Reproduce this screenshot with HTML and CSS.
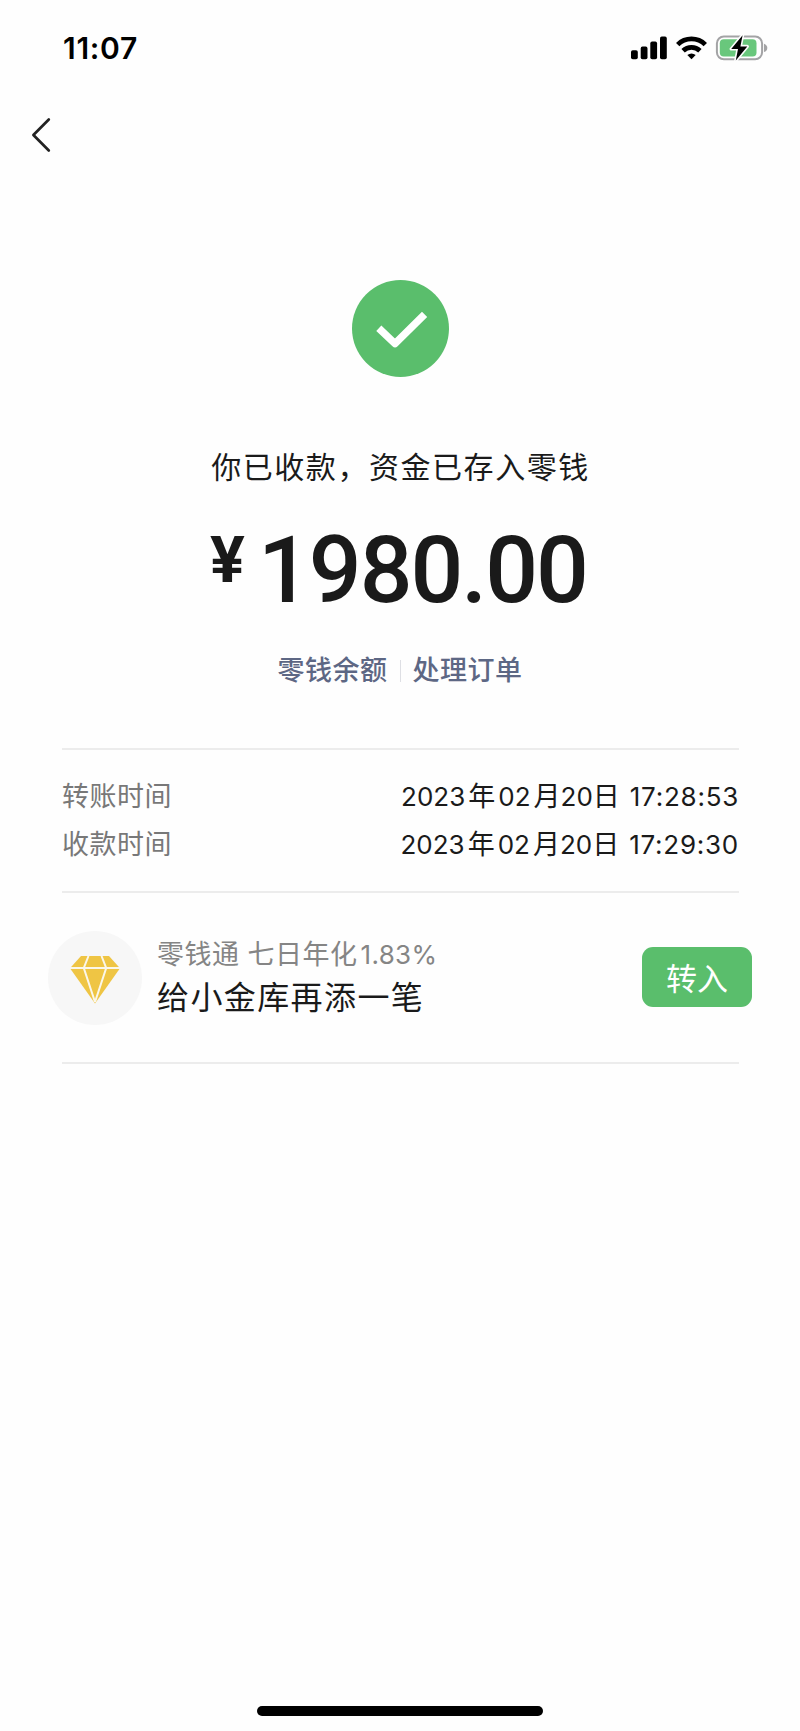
FILE: index.html
```html
<!DOCTYPE html>
<html lang="zh-CN">
<head>
<meta charset="utf-8">
<title>收款详情</title>
<link rel="stylesheet" href="styles.css">
</head>
<body>
<main class="screen">
  <header class="status-bar">
    <time class="clock">11:07</time>
    <svg class="status-icons" viewBox="630 34 138 28" aria-hidden="true">
      <rect x="631" y="50.3" width="6.8" height="8.9" rx="1.8"/>
      <rect x="640.7" y="46.6" width="6.8" height="12.6" rx="1.8"/>
      <rect x="650.3" y="41.6" width="6.8" height="17.6" rx="1.8"/>
      <rect x="660" y="36.6" width="6.8" height="22.6" rx="1.8"/>
      <g fill="none" stroke="#000" stroke-width="4.8">
        <path d="M677.7 44.6A19.6 19.6 0 0 1 705.3 44.6"/>
        <path d="M683.1 50.8A12 12 0 0 1 699.9 50.8"/>
      </g>
      <path d="M687.3 55Q691.5 51.8 695.7 55L691.5 59.3Z"/>
      <rect x="716.9" y="36.5" width="45.2" height="22.8" rx="7" fill="none" stroke="#a3a3a5" stroke-width="2"/>
      <rect x="719.8" y="39.3" width="36.7" height="17.2" rx="4" fill="#69c77c"/>
      <path d="M764 43.8Q767.3 45 767.3 48T764 52Z" fill="#a3a3a5"/>
      <path d="M742.6 35.2L731.2 48.9H738L735.8 60.4L747.3 46.4H740.4Z" stroke="#fefefe" stroke-width="3.2" paint-order="stroke" stroke-linejoin="round"/>
    </svg>
  </header>
  <nav class="nav">
    <svg class="back" viewBox="0 0 20 36" role="img" aria-label="返回"><path d="M17.8 2.5L2.4 18L17.8 33.5"/></svg>
  </nav>
  <section class="result">
    <svg class="success" viewBox="0 0 97 97" aria-hidden="true">
      <circle cx="48.5" cy="48.5" r="48.5" fill="#5abe6c"/>
      <path d="M26.8 48.3L43 63.6L72.6 34.4" fill="none" stroke="#fff" stroke-width="7.4" stroke-linejoin="round"/>
    </svg>
    <h1 class="message">你已收款，资金已存入零钱</h1>
    <div class="amount"><span class="currency">¥</span><span class="value">1980.00</span></div>
    <div class="links"><a>零钱余额</a><i class="separator"></i><a>处理订单</a></div>
  </section>
  <dl class="details">
    <div class="row"><dt>转账时间</dt><dd>2023<b class="year">年</b>02<b class="month">月</b>20<b class="day">日</b><span class="hour">17:28:53</span></dd></div>
    <div class="row"><dt>收款时间</dt><dd>2023<b class="year">年</b>02<b class="month">月</b>20<b class="day">日</b><span class="hour">17:29:30</span></dd></div>
  </dl>
  <section class="promo">
    <div class="badge">
      <svg class="diamond" viewBox="0 0 50 48" aria-hidden="true">
        <path d="M11 0H39L50 12.2L25 47.5L0 12.2Z" fill="#efc544"/>
        <path d="M0 12H50M18.500 0L13.800 12L25 46M31.500 0L36.200 12L25 46" fill="none" stroke="#fbf7ea" stroke-width="2"/>
      </svg>
    </div>
    <div class="promo-text">
      <p class="rate">零钱通 七日年化<span class="percent">1.83%</span></p>
      <p class="slogan">给小金库再添一笔</p>
    </div>
    <button class="transfer">转入</button>
  </section>
  <footer class="home"><div class="home-bar"></div></footer>
</main>
</body>
</html>
```
FILE: styles.css
```css
* { box-sizing: border-box; margin: 0; padding: 0; }
body { background: #fefefe; font-family: Inter, "Noto Sans CJK SC", sans-serif; color: #1a1a1a; }
.screen { display: flex; flex-direction: column; width: 800px; height: 1731px; }
.status-bar { display: flex; justify-content: space-between; align-items: center; height: 96px; padding: 0 32px 0 63px; }
.clock { font-size: 30px; font-weight: 600; line-height: 36px; letter-spacing: .7px; color: #000; }
.status-icons { width: 138px; height: 28px; }
.nav { display: flex; align-items: center; height: 78px; padding-left: 31px; }
.back { width: 20px; height: 36px; fill: none; stroke: #222; stroke-width: 2.7; stroke-linecap: round; stroke-linejoin: round; }
.result { display: flex; flex-direction: column; align-items: center; height: 574px; padding-top: 106px; }
.success { width: 97px; height: 97px; flex: none; }
.message { margin-top: 70px; padding-left: 1px; font-size: 30px; font-weight: 400; line-height: 40px; letter-spacing: 1.55px; }
.amount { display: flex; align-items: flex-start; margin-top: 36px; padding-right: 3px; height: 92px; font-family: Roboto, sans-serif; }
.currency { font-size: 65px; font-weight: 700; line-height: 75px; margin-right: 13px; }
.value { font-size: 93px; font-weight: 500; line-height: 95px; letter-spacing: -2px; }
.links { display: flex; align-items: center; margin-top: 38px; height: 36px; font-size: 27px; font-weight: 500; line-height: 36px; letter-spacing: .5px; color: #5d6784; }
.separator { width: 1px; height: 22px; margin: 0 12px; background: #dedfe4; }
.details { display: flex; flex-direction: column; justify-content: center; height: 145px; margin: 0 61px 0 62px; border-top: 2px solid #ececec; border-bottom: 2px solid #ececec; }
.row { display: flex; justify-content: space-between; height: 48px; line-height: 48px; font-size: 27px; white-space: nowrap; }
dt { color: #787878; letter-spacing: .5px; }
dd { font-size: 26px; }
dd b { font-weight: 400; font-size: 27px; }
.year { margin: 0 3px; }
.month { margin: 0 0 0 3px; }
.day { margin: 0 1px 0 0; }
.hour { margin-left: 9px; letter-spacing: .75px; }
.promo { display: flex; height: 171px; margin: 0 61px 0 62px; border-bottom: 2px solid #ececec; }
.badge { display: flex; align-items: center; justify-content: center; width: 94px; height: 94px; margin: 38px 0 0 -14px; border-radius: 50%; background: #f7f7f7; }
.diamond { width: 50px; height: 48px; margin-top: 4px; }
.promo-text { margin: 43px 0 0 15px; }
.rate { font-size: 27px; line-height: 38px; letter-spacing: .5px; color: #858585; }
.percent { margin-left: 3px; font-size: 26px; letter-spacing: .3px; }
.slogan { margin-top: 1px; font-size: 32px; line-height: 46px; letter-spacing: 1.4px; }
.transfer { width: 110px; height: 60px; margin: 54px -13px 0 auto; border: 0; border-radius: 11px; background: #5abe6c; color: #fff; font: 400 31px/60px "Noto Sans CJK SC", sans-serif; }
.home { display: flex; justify-content: center; margin-top: auto; padding-bottom: 15px; }
.home-bar { width: 286px; height: 10px; border-radius: 5px; background: #000; }
```
